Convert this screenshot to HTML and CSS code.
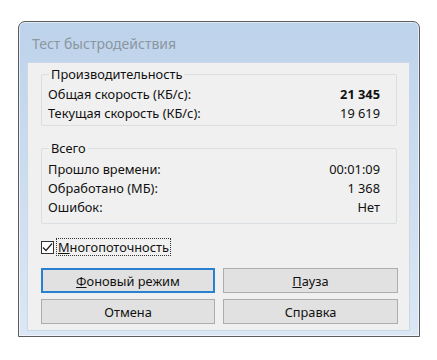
FILE: index.html
```html
<!DOCTYPE html>
<html lang="ru">
<head>
    <meta charset="UTF-8">
    <title>Тест быстродействия</title>
    <link rel="stylesheet" href="styles.css">
</head>
<body>

    <div class="window">
        <div class="titlebar">Тест быстродействия</div>

        <div class="client">
            <fieldset class="group perf">
                <legend>Производительность</legend>
                <div class="row"><span>Общая скорость (КБ/с):</span><b>21 345</b></div>
                <div class="row"><span>Текущая скорость (КБ/с):</span><span>19 619</span></div>
            </fieldset>

            <fieldset class="group total">
                <legend>Всего</legend>
                <div class="row"><span>Прошло времени:</span><span>00:01:09</span></div>
                <div class="row"><span>Обработано (МБ):</span><span>1 368</span></div>
                <div class="row"><span>Ошибок:</span><span>Нет</span></div>
            </fieldset>

            <label class="check">
                <span class="box">
                    <svg width="11" height="11" viewBox="0 0 11 11"><path d="M1 5.5 L4 8.5 L10 1.5" fill="none" stroke="#222" stroke-width="1.2"/></svg>
                </span>
                <span class="focus"><u>М</u>ногопоточность</span>
            </label>

            <div class="buttons">
                <button class="default"><u>Ф</u>оновый режим</button>
                <button><u>П</u>ауза</button>
                <button>Отмена</button>
                <button>Справка</button>
            </div>
        </div>
    </div>

</body>
</html>
```

FILE: styles.css
```css
/* General */
body {
    margin: 0;
    background: #fff;
    font-family: "Noto Sans", "Open Sans", sans-serif;
    font-size: 12.8px;
    color: #111;
}

/* Window frame */
.window {
    margin: 21px 0 0 18px;
    width: 383px;
    height: 309px;
    border: 1px solid #5c5c5c;
    border-radius: 7px 7px 0 0;
    background: linear-gradient(#bdd3eb, #dbe7f4);
    box-shadow: inset 0 0 0 1px rgba(255, 255, 255, 0.55);
    padding: 0 9px 5px 8px;
    display: flex;
    flex-direction: column;
}

.titlebar {
    height: 40px;
    line-height: 44px;
    padding-left: 5px;
    font-size: 14px;
    color: #8b96a1;
}

.client {
    flex: 1;
    background: #f0f0f0;
    border: 1px solid #cad8e8;
    padding: 3px 12px 0 13px;
}

/* Group boxes */
.group {
    margin: 0;
    border: 1px solid #d9dee3;
    border-radius: 2px;
    padding: 3px 16px 2px 6px;
}

.group legend {
    padding: 0 2px;
    margin-left: 1px;
    line-height: 16px;
}

.total {
    margin-top: 14px;
    padding-top: 4px;
    padding-bottom: 6px;
}

.row {
    display: flex;
    justify-content: space-between;
    line-height: 19px;
}

.row b {
    font-weight: bold;
}

/* Checkbox */
.check {
    display: flex;
    align-items: center;
    margin-top: 14px;
    height: 18px;
}

.check .box {
    width: 11px;
    height: 11px;
    border: 1px solid #333;
    background: #fff;
    display: flex;
}

.check .focus {
    margin-left: 2px;
    padding: 0 1px;
    line-height: 16px;
    border: 1px dotted #333;
}

/* Buttons */
.buttons {
    margin-top: 12px;
    display: grid;
    grid-template-columns: 174px 175px;
    column-gap: 8px;
    row-gap: 6px;
}

button {
    height: 25px;
    background: #e1e1e1;
    border: 1px solid #adadad;
    font-family: inherit;
    font-size: 12.8px;
    color: #111;
    padding: 0;
}

button.default {
    border: 2px solid #2b7fd0;
}
```
